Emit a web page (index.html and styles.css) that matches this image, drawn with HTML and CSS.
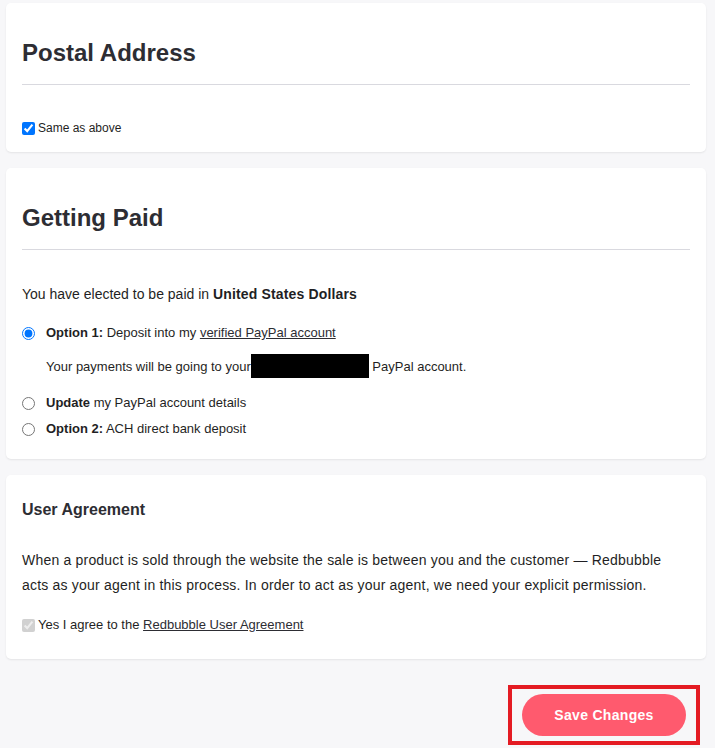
FILE: index.html
```html
<!DOCTYPE html>
<html lang="en">

<head>
    <meta charset="UTF-8">
    <meta name="viewport" content="width=device-width, initial-scale=1.0">
    <title>Account Settings</title>
    <link rel="stylesheet" href="styles.css">
</head>

<body>
    <div class="page">
        <section class="card">
            <h2>Postal Address</h2>
            <hr>
            <label class="check">
                <input type="checkbox" checked>
                <span>Same as above</span>
            </label>
        </section>

        <section class="card paid">
            <h2>Getting Paid</h2>
            <hr>
            <p class="currency">You have elected to be paid in <b>United States Dollars</b></p>

            <label class="option first">
                <input type="radio" name="payout" checked>
                <span><b>Option 1:</b> Deposit into my <a href="#">verified PayPal account</a></span>
            </label>
            <p class="going">Your payments will be going to your<span class="redacted"></span> PayPal account.</p>

            <label class="option update">
                <input type="radio" name="payout">
                <span><b>Update</b> my PayPal account details</span>
            </label>
            <label class="option">
                <input type="radio" name="payout">
                <span><b>Option 2:</b> ACH direct bank deposit</span>
            </label>
        </section>

        <section class="card agreement">
            <h3>User Agreement</h3>
            <p class="terms">When a product is sold through the website the sale is between you and the customer — Redbubble acts as your agent in this process. In order to act as your agent, we need your explicit permission.</p>
            <label class="check agree">
                <input type="checkbox" checked disabled>
                <span>Yes I agree to the <a href="#">Redbubble User Agreement</a></span>
            </label>
        </section>

        <div class="actions">
            <div class="highlight">
                <button type="button">Save Changes</button>
            </div>
        </div>
    </div>
</body>

</html>
```

FILE: styles.css
```css
* {
    box-sizing: border-box;
}

body {
    margin: 0;
    background: #f7f7f9;
    font-family: "Liberation Sans", Arial, sans-serif;
    color: #1f1f24;
}

.page {
    padding: 3px 9px 0 6px;
}

.card {
    background: #fff;
    border-radius: 5px;
    box-shadow: 0 1px 2px rgba(0, 0, 0, .08);
    padding: 36px 16px 16px;
    margin-bottom: 16px;
}

h2 {
    margin: 0;
    font-size: 24px;
    line-height: 27px;
    color: #2d2d33;
}

hr {
    border: 0;
    border-top: 1px solid #d9d9df;
    margin: 18px 0 0;
}

a {
    color: #2d2d33;
}

.check {
    display: flex;
    align-items: center;
    gap: 3px;
    margin-top: 35px;
    font-size: 12px;
    line-height: 16px;
}

.check input {
    margin: 0;
    width: 13px;
    height: 13px;
}

.paid {
    padding-bottom: 20px;
}

.currency {
    margin: 34px 0 0;
    font-size: 14px;
    line-height: 20px;
}

.currency b {
    letter-spacing: .15px;
}

.option {
    display: flex;
    align-items: center;
    gap: 11px;
    font-size: 13px;
    line-height: 20px;
    margin-top: 6px;
}

.option input {
    margin: 0;
    width: 13px;
    height: 13px;
}

.option.first {
    margin-top: 19px;
}

.option.update {
    margin-top: 15px;
}

.going {
    margin: 11px 0 0 24px;
    font-size: 13px;
    line-height: 20px;
}

.redacted {
    display: inline-block;
    width: 118px;
    height: 24px;
    background: #000;
    vertical-align: -7px;
}

.agreement {
    padding: 26px 16px 26px;
}

h3 {
    margin: 0;
    font-size: 16px;
    color: #2d2d33;
}

.terms {
    margin: 29px 0 0;
    font-size: 14px;
    line-height: 25px;
    letter-spacing: .2px;
}

.agree {
    margin-top: 19px;
    font-size: 13px;
}

.actions {
    display: flex;
    justify-content: flex-end;
    padding: 10px 6px 0 0;
}

.highlight {
    border: 4px solid #e41b23;
    padding: 5px 10px;
}

.highlight button {
    width: 164px;
    height: 42px;
    border: 0;
    border-radius: 21px;
    background: #ff5a6e;
    color: #fff;
    font-family: inherit;
    font-size: 14px;
    font-weight: bold;
    letter-spacing: .3px;
}
```
